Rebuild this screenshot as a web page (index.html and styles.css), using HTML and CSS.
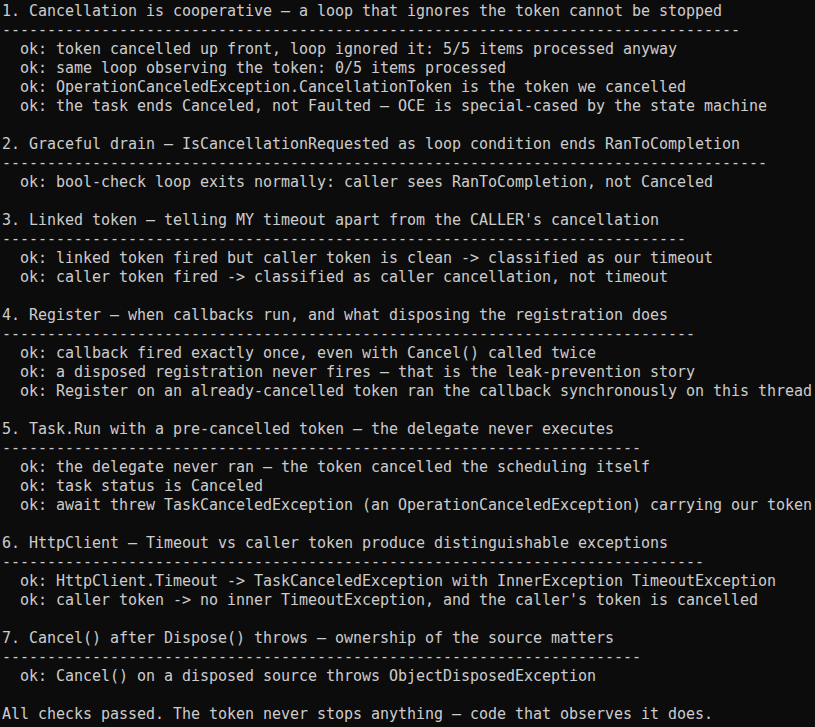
FILE: index.html
```html
<!DOCTYPE html>
<html lang="en">
<head>
<meta charset="utf-8">
<title>Cancellation checks</title>
<link rel="stylesheet" href="styles.css">
</head>
<body>
<main class="term">
<section class="sec">
<div class="line">1. Cancellation is cooperative — a loop that ignores the token cannot be stopped</div>
<div class="line rule">----------------------------------------------------------------------------------</div>
<div class="line">  ok: token cancelled up front, loop ignored it: 5/5 items processed anyway</div>
<div class="line">  ok: same loop observing the token: 0/5 items processed</div>
<div class="line">  ok: OperationCanceledException.CancellationToken is the token we cancelled</div>
<div class="line">  ok: the task ends Canceled, not Faulted — OCE is special-cased by the state machine</div>
</section>
<section class="sec">
<div class="line">2. Graceful drain — IsCancellationRequested as loop condition ends RanToCompletion</div>
<div class="line rule">-------------------------------------------------------------------------------------</div>
<div class="line">  ok: bool-check loop exits normally: caller sees RanToCompletion, not Canceled</div>
</section>
<section class="sec">
<div class="line">3. Linked token — telling MY timeout apart from the CALLER's cancellation</div>
<div class="line rule">----------------------------------------------------------------------------</div>
<div class="line">  ok: linked token fired but caller token is clean -&gt; classified as our timeout</div>
<div class="line">  ok: caller token fired -&gt; classified as caller cancellation, not timeout</div>
</section>
<section class="sec">
<div class="line">4. Register — when callbacks run, and what disposing the registration does</div>
<div class="line rule">-----------------------------------------------------------------------------</div>
<div class="line">  ok: callback fired exactly once, even with Cancel() called twice</div>
<div class="line">  ok: a disposed registration never fires — that is the leak-prevention story</div>
<div class="line">  ok: Register on an already-cancelled token ran the callback synchronously on this thread</div>
</section>
<section class="sec">
<div class="line">5. Task.Run with a pre-cancelled token — the delegate never executes</div>
<div class="line rule">-----------------------------------------------------------------------</div>
<div class="line">  ok: the delegate never ran — the token cancelled the scheduling itself</div>
<div class="line">  ok: task status is Canceled</div>
<div class="line">  ok: await threw TaskCanceledException (an OperationCanceledException) carrying our token</div>
</section>
<section class="sec">
<div class="line">6. HttpClient — Timeout vs caller token produce distinguishable exceptions</div>
<div class="line rule">------------------------------------------------------------------------------</div>
<div class="line">  ok: HttpClient.Timeout -&gt; TaskCanceledException with InnerException TimeoutException</div>
<div class="line">  ok: caller token -&gt; no inner TimeoutException, and the caller's token is cancelled</div>
</section>
<section class="sec">
<div class="line">7. Cancel() after Dispose() throws — ownership of the source matters</div>
<div class="line rule">-----------------------------------------------------------------------</div>
<div class="line">  ok: Cancel() on a disposed source throws ObjectDisposedException</div>
</section>
<div class="line">All checks passed. The token never stops anything — code that observes it does.</div>
</main>
</body>
</html>
```
FILE: styles.css
```css
html, body {
  margin: 0;
  padding: 0;
  background: #0c0c0c;
  overflow: hidden;
  width: 815px;
  height: 727px;
}

.term {
  padding: 2px 0 0 2px;
  color: #cccccc;
  font-family: "DejaVu Sans Mono", "Liberation Mono", monospace;
  font-size: 15px;
  line-height: 19px;
  letter-spacing: -0.03px;
}

.line {
  white-space: pre;
  height: 19px;
}

.sec {
  margin-bottom: 19px;
}
```
